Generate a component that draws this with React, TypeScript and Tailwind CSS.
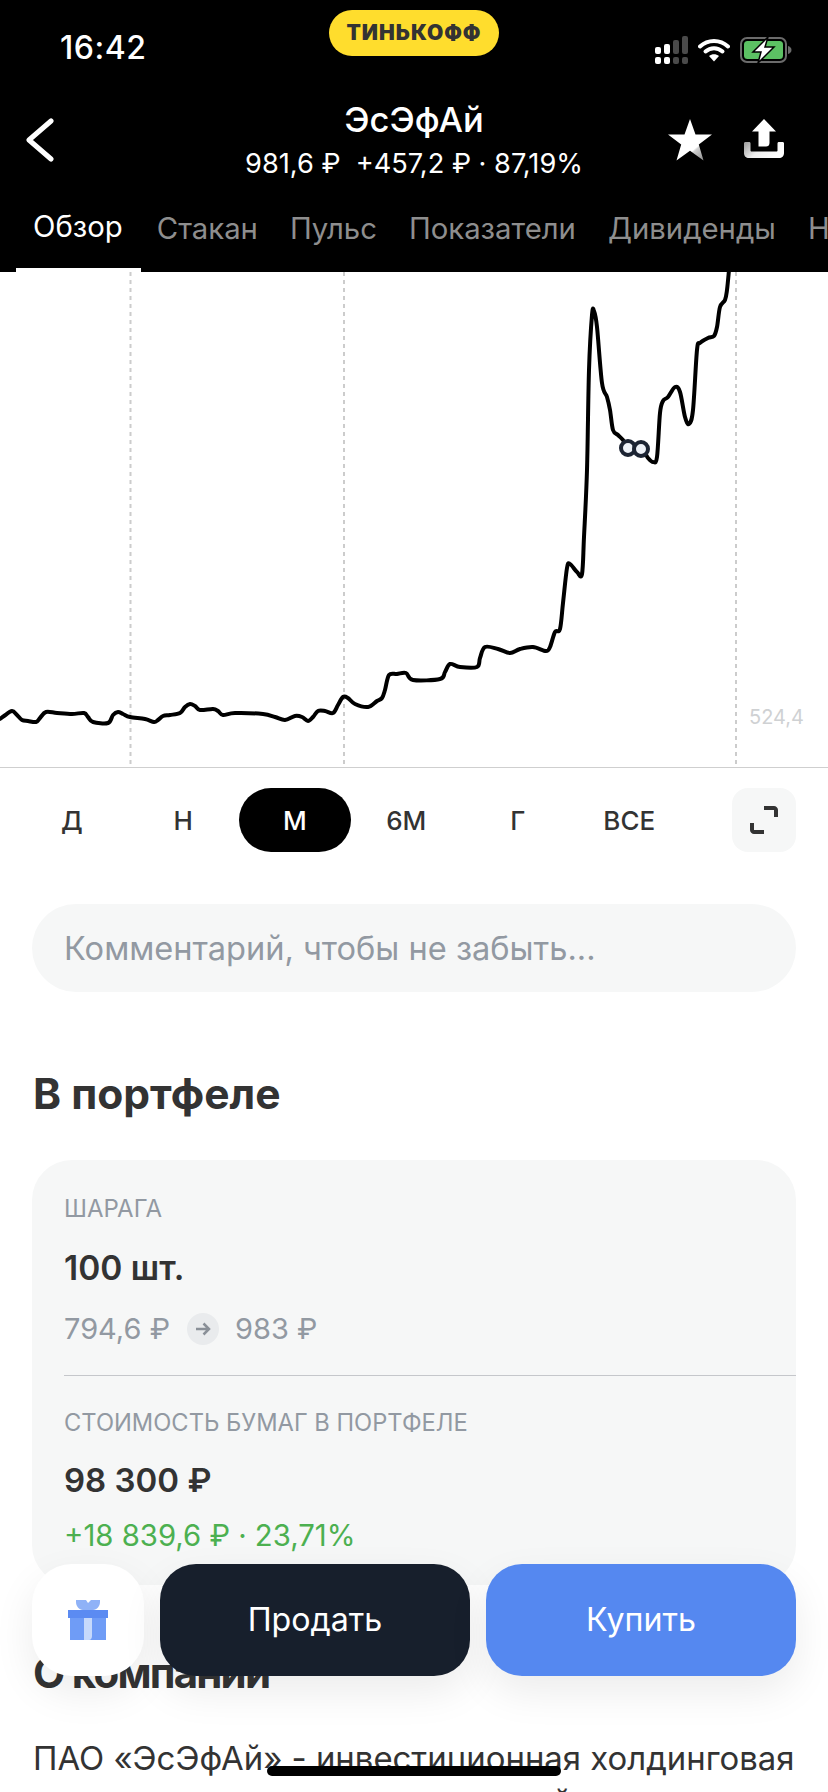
const tabs = ['Обзор', 'Стакан', 'Пульс', 'Показатели', 'Дивиденды', 'Новости'];
const periods = ['Д', 'Н', 'М', '6М', 'Г', 'ВСЕ'];

// точки графика, координаты как на экране (минус верх блока 272)
const linePoints: [number, number][] = [
  [0, 719], [4, 716], [12, 711], [17, 715], [22, 720], [28, 721], [36, 722], [40, 718],
  [46, 712], [57, 713], [72, 714], [84, 713], [88, 717], [93, 722], [108, 723], [113, 715],
  [118, 712], [123, 714], [130, 717], [145, 719], [154, 722], [158, 720], [163, 716],
  [170, 715], [180, 713], [185, 707], [190, 704], [195, 706], [200, 710], [213, 709],
  [218, 711], [223, 715], [235, 713], [263, 714], [275, 717], [285, 720], [295, 716],
  [302, 717], [308, 721], [313, 717], [318, 711], [325, 711], [333, 713], [338, 705],
  [343, 697], [348, 698], [355, 704], [368, 707], [377, 701], [382, 698], [385, 690],
  [389, 675], [397, 674], [406, 673], [413, 680], [440, 679], [445, 672], [450, 664],
  [460, 667], [477, 667], [480, 658], [485, 647], [498, 649], [510, 653], [520, 649],
  [533, 647], [546, 651], [550, 647], [555, 632], [560, 629], [563, 603], [567, 568],
  [570, 564], [577, 572], [582, 574], [584, 537], [587, 470], [589, 370], [592, 315],
  [594, 311], [597, 327], [602, 383], [607, 397], [610, 410], [613, 430], [618, 435],
  [623, 440], [628, 447], [641, 448], [648, 458], [653, 462], [657, 457], [660, 413],
  [663, 401], [668, 397], [675, 387], [680, 392], [685, 417], [689, 424], [693, 410],
  [697, 350], [700, 343], [708, 338], [714, 336], [717, 327], [720, 307], [725, 300],
  [727, 290], [729, 270],
];

function smoothPath(points: [number, number][]) {
  let d = `M${points[0][0]} ${points[0][1] - 272}`;
  for (let i = 0; i < points.length - 1; i++) {
    const p0 = points[Math.max(i - 1, 0)];
    const p1 = points[i];
    const p2 = points[i + 1];
    const p3 = points[Math.min(i + 2, points.length - 1)];
    const c1x = p1[0] + (p2[0] - p0[0]) / 6;
    const c1y = p1[1] + (p2[1] - p0[1]) / 6 - 272;
    const c2x = p2[0] - (p3[0] - p1[0]) / 6;
    const c2y = p2[1] - (p3[1] - p1[1]) / 6 - 272;
    d += ` C${c1x} ${c1y} ${c2x} ${c2y} ${p2[0]} ${p2[1] - 272}`;
  }
  return d;
}

function StatusIcons() {
  return (
    <div className="flex items-center justify-end gap-[10px] pr-[36px] pt-[8px]">
      <svg width="34" height="28" viewBox="0 0 34 28">
        <rect x="1" y="11" width="6" height="7" rx="2" fill="#fff" />
        <rect x="1" y="21" width="6" height="7" rx="2" fill="#fff" />
        <rect x="10" y="8" width="6" height="10" rx="2" fill="#fff" />
        <rect x="10" y="21" width="6" height="7" rx="2" fill="#fff" />
        <rect x="19" y="4" width="6" height="14" rx="2" fill="#4a4a4a" />
        <rect x="19" y="21" width="6" height="7" rx="2" fill="#4a4a4a" />
        <rect x="28" y="0" width="6" height="18" rx="2" fill="#4a4a4a" />
        <rect x="28" y="21" width="6" height="7" rx="2" fill="#4a4a4a" />
      </svg>
      <svg width="32" height="24" viewBox="0 0 32 24" fill="none">
        <path d="M2 8.5C10 1 22 1 30 8.5" stroke="#fff" strokeWidth="4" strokeLinecap="round" />
        <path d="M7.5 13.5C12.5 9 19.5 9 24.5 13.5" stroke="#fff" strokeWidth="4" strokeLinecap="round" />
        <path d="M16 23.5L11 18C14 15.5 18 15.5 21 18L16 23.5Z" fill="#fff" />
      </svg>
      <svg width="52" height="26" viewBox="0 0 52 26" fill="none">
        <rect x="1" y="1" width="45" height="24" rx="6" stroke="#6b6b6b" strokeWidth="2" />
        <rect x="4" y="4" width="39" height="18" rx="3.5" fill="#5cc163" />
        <path d="M48 9c2 .6 3.5 2 3.5 4s-1.500 3.400-3.500 4V9Z" fill="#6b6b6b" />
        <path d="M28 0L13 15h8l-3 11 16-16h-9l3-10Z" fill="#fff" stroke="#000" strokeWidth="1.500" />
      </svg>
    </div>
  );
}

function BackIcon() {
  return (
    <svg width="30" height="44" viewBox="0 0 30 44" fill="none" stroke="#fff" strokeWidth="5" strokeLinecap="round" strokeLinejoin="round">
      <path d="M26 3L4 22L26 41" />
    </svg>
  );
}

function StarIcon() {
  return (
    <svg width="44" height="42" viewBox="0 0 44 42">
      <defs>
        <linearGradient id="star-fade" gradientUnits="userSpaceOnUse" x1="24" y1="27" x2="36" y2="41">
          <stop offset="0.2" stopColor="#fff" />
          <stop offset="0.3" stopColor="#d0d0d0" />
          <stop offset="1" stopColor="#8c8c8c" />
        </linearGradient>
      </defs>
      <path
        d="M22 0L27.500 15.500H44L30.800 25.500L35.500 41.500L22 31.800L8.500 41.500L13.200 25.500L0 15.500H16.500L22 0Z"
        fill="url(#star-fade)"
      />
    </svg>
  );
}

function ShareIcon() {
  return (
    <svg width="40" height="39" viewBox="0 0 40 39">
      <defs>
        <linearGradient id="tray-fade" x1="0" y1="0" x2="1" y2="0.4">
          <stop offset="0" stopColor="#9a9a9a" />
          <stop offset="0.5" stopColor="#f0f0f0" />
          <stop offset="1" stopColor="#fff" />
        </linearGradient>
      </defs>
      <path d="M20 0L32 12.500H25.500V24C25.500 26.500 24 27.500 22 27.500H14.500V12.500H8L20 0Z" fill="#fff" />
      <path
        d="M0 24.500C0 23.500 .6 23 1.500 23H5C6 23 6.500 23.500 6.500 24.500V31.500C6.500 32.300 7 32.500 7.500 32.500H32.500C33 32.500 33.500 32.300 33.500 31.500V24.500C33.500 23.500 34 23 35 23H38.500C39.400 23 40 23.500 40 24.500V34C40 37 38 39 35 39H5C2 39 0 37 0 34V24.500Z"
        fill="url(#tray-fade)"
      />
    </svg>
  );
}

function GiftIcon() {
  return (
    <svg width="40" height="40" viewBox="0 0 40 40">
      <path d="M8 0H18L20 3L23 0H32V2C32 6 29 10 25 10H15C11 10 8 6 8 2V0Z" fill="#8fb2f7" />
      <rect x="2" y="17" width="36" height="23" fill="#6f9cf6" />
      <path d="M22 17H38V33C38 37 35 40 31 40H22V17Z" fill="#6f9cf6" />
      <path d="M16 17H24V36C24 38 23 40 21 40H16V17Z" fill="#c6d9fb" />
      <rect x="0" y="10" width="40" height="8" fill="#5b8bf2" />
    </svg>
  );
}

function PriceChart() {
  return (
    <div className="relative h-[496px] border-b border-[#cfcfcf] bg-white">
      <svg width="828" height="495" viewBox="0 0 828 495" className="block" fill="none">
        {[130.5, 344, 736].map((x) => (
          <line key={x} x1={x} y1="0" x2={x} y2="494" stroke="#cccccc" strokeWidth="2" strokeDasharray="4 4" />
        ))}
        <path d={smoothPath(linePoints)} stroke="#000" strokeWidth="4" strokeLinejoin="round" strokeLinecap="round" />
        <circle cx="628" cy="176" r="7" fill="#eef2f8" stroke="#1c2433" strokeWidth="4" />
        <circle cx="641" cy="177" r="7" fill="#eef2f8" stroke="#1c2433" strokeWidth="4" />
      </svg>
      <span className="absolute right-[24px] top-[433px] text-[20px] leading-6 text-[#cfd1d3]">524,4</span>
    </div>
  );
}

export default function App() {
  return (
    <div className="relative h-[1792px] w-[828px] overflow-hidden bg-white font-[Inter,'Noto_Sans',sans-serif] text-[#333333]">
      <header className="h-[272px] bg-black text-white">
        <div className="grid h-[92px] grid-cols-[1fr_170px_1fr] items-center">
          <span className="pl-[60px] pt-[4px] text-[32px] font-medium leading-none tracking-[0.5px]">16:42</span>
          <div className="mt-[10px] flex h-[46px] items-center justify-center self-start rounded-[23px] bg-[#ffdd2d] text-[21px] font-black tracking-[1px] text-[#333333]">
            ТИНЬКОФФ
          </div>
          <StatusIcons />
        </div>

        <div className="flex h-[88px] items-start">
          <div className="w-[160px] pl-[25px] pt-[26px]">
            <BackIcon />
          </div>
          <div className="flex-1 whitespace-nowrap pt-[10px] text-center">
            <div className="text-[34.5px] font-medium leading-9">ЭсЭфАй</div>
            <div className="mt-[10px] text-[27.2px] leading-8">981,6 ₽&nbsp;&nbsp;+457,2 ₽ · 87,19%</div>
          </div>
          <div className="flex w-[160px] items-start gap-[32px] pt-[27px]">
            <StarIcon />
            <ShareIcon />
          </div>
        </div>

        <nav className="flex h-[92px] overflow-hidden pl-[16px]">
          {tabs.map((tab, i) => (
            <div
              key={tab}
              className={`flex h-[92px] shrink-0 items-center pt-[5px] text-[29.3px] ${
                i === 0 ? 'border-b-4 border-white pl-[17px] pr-[18px] text-white' : 'px-[16px] text-[#8e8e8e]'
              }`}
            >
              {tab}
            </div>
          ))}
        </nav>
      </header>

      <PriceChart />

      <div className="mt-[20px] flex h-[64px] items-center pl-[16px] pr-[32px]">
        {periods.map((p) => (
          <div
            key={p}
            className={`flex h-[64px] w-[111.5px] items-center justify-center rounded-[32px] pt-[1px] text-[26px] font-medium ${
              p === 'М' ? 'bg-black text-white' : 'text-[#333333]'
            }`}
          >
            {p}
          </div>
        ))}
        <div className="ml-auto flex h-[64px] w-[64px] items-center justify-center rounded-[16px] bg-[#f6f7f7]">
          <svg width="28" height="28" viewBox="0 0 28 28" fill="none" stroke="#333333" strokeWidth="4">
            <path d="M14 2H24C25 2 26 3 26 4V11" />
            <path d="M2 17V24C2 25 3 26 4 26H14" />
          </svg>
        </div>
      </div>

      <div className="mx-[32px] mt-[52px] flex h-[88px] items-center rounded-[44px] bg-[#f6f7f7] pl-[32px] text-[32.6px] text-[#9299a2]">
        Комментарий, чтобы не забыть...
      </div>

      <h2 className="mx-[33px] mt-[74px] text-[42.5px] font-bold leading-[56px]">В портфеле</h2>

      <section className="mx-[32px] mt-[38px] h-[425px] rounded-[40px] bg-[#f6f7f7] pl-[32px] pt-[36px]">
        <div className="text-[24px] leading-[26px] text-[#9299a2]">ШАРАГА</div>
        <div className="mt-[26px] text-[33.5px] font-semibold leading-[40px]">100 шт.</div>
        <div className="mt-[23px] flex items-center text-[29px] leading-9 text-[#9299a2]">
          <span>794,6 ₽</span>
          <span className="ml-[17px] mr-[16px] flex h-[32px] w-[32px] items-center justify-center rounded-full bg-[#e9ebed]">
            <svg width="16" height="14" viewBox="0 0 16 14" fill="none" stroke="#8a9098" strokeWidth="2.500">
              <path d="M1 7H14M8.500 1.500L14 7L8.500 12.500" />
            </svg>
          </span>
          <span>983 ₽</span>
        </div>
        <div className="mt-[28px] border-t border-[#c5c7cb] pt-[34px] text-[23.7px] leading-[26px] text-[#9299a2]">
          СТОИМОСТЬ БУМАГ В ПОРТФЕЛЕ
        </div>
        <div className="mt-[24px] text-[33px] font-semibold leading-[40px]">98 300 ₽</div>
        <div className="mt-[18px] text-[29.3px] leading-9 text-[#4cb050]">+18 839,6 ₽ · 23,71%</div>
      </section>

      <h2 className="mx-[33px] mt-[60px] text-[42px] font-bold leading-[56px] tracking-[-1.8px]">О компании</h2>
      <p className="ml-[33px] mr-[15px] mt-[35px] text-[32.9px] leading-[44px]">
        ПАО «ЭсЭфАй» - инвестиционная холдинговая компания, основанная на российском рынке
      </p>

      {/* нижние кнопки поверх контента */}
      <div className="absolute left-[32px] top-[1564px] flex h-[112px] w-[764px] gap-[16px] text-[32.2px] text-white">
        <div className="flex w-[112px] shrink-0 items-center justify-center rounded-[40px] bg-white shadow-[0_16px_40px_rgba(0,0,0,0.08)]">
          <GiftIcon />
        </div>
        <div className="flex flex-1 items-center justify-center rounded-[36px] bg-[#171f2c] shadow-[0_16px_40px_rgba(0,0,0,0.08)]">
          Продать
        </div>
        <div className="flex flex-1 items-center justify-center rounded-[36px] bg-[#5588f0] shadow-[0_16px_40px_rgba(0,0,0,0.08)]">
          Купить
        </div>
      </div>

      <div className="absolute left-[267px] top-[1766px] h-[10px] w-[294px] rounded-full bg-black" />
    </div>
  );
}
